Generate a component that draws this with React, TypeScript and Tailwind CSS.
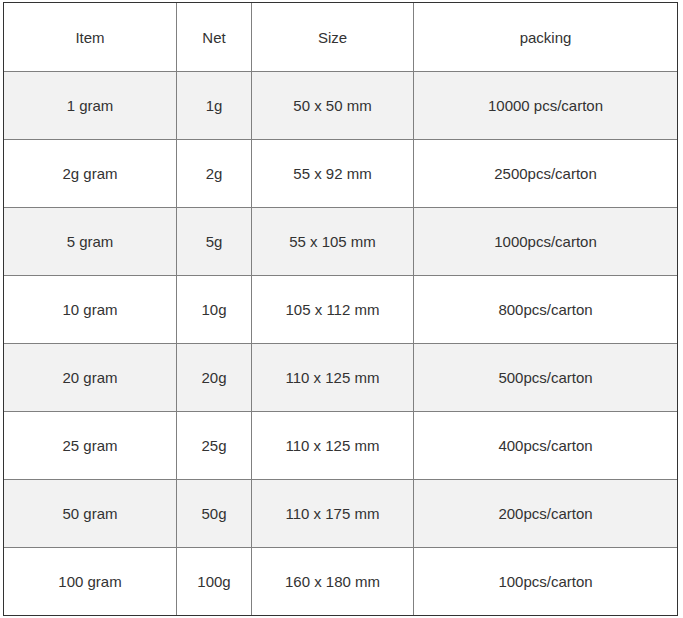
const rows = [
  ["1 gram", "1g", "50 x 50 mm", "10000 pcs/carton"],
  ["2g gram", "2g", "55 x 92 mm", "2500pcs/carton"],
  ["5 gram", "5g", "55 x 105 mm", "1000pcs/carton"],
  ["10 gram", "10g", "105 x 112 mm", "800pcs/carton"],
  ["20 gram", "20g", "110 x 125 mm", "500pcs/carton"],
  ["25 gram", "25g", "110 x 125 mm", "400pcs/carton"],
  ["50 gram", "50g", "110 x 175 mm", "200pcs/carton"],
  ["100 gram", "100g", "160 x 180 mm", "100pcs/carton"],
];

const headers = ["Item", "Net", "Size", "packing"];

function Row({ cells, shaded, first }: { cells: string[]; shaded: boolean; first: boolean }) {
  return (
    <div
      className={`grid grid-cols-[172px_75px_162px_264px] h-[68px] ${first ? "h-[67px]" : "border-t border-[#808080]"} ${
        shaded ? "bg-[#f2f2f2]" : "bg-white"
      }`}
    >
      {cells.map((c, i) => (
        <div
          key={i}
          className={`flex items-center justify-center ${i > 0 ? "border-l border-[#808080]" : ""}`}
        >
          {c}
        </div>
      ))}
    </div>
  );
}

export default function App() {
  return (
    <div className="bg-white w-[683px] h-[618px] pt-[2px] pl-[3px]" style={{ fontFamily: '"Liberation Sans", Arial, sans-serif' }}>
      <div className="w-[675px] border border-[#333333] text-[15px] text-[#333333] leading-none">
        <Row cells={headers} shaded={false} first />
        {rows.map((r, i) => (
          <Row key={i} cells={r} shaded={i % 2 === 0} first={false} />
        ))}
      </div>
    </div>
  );
}
